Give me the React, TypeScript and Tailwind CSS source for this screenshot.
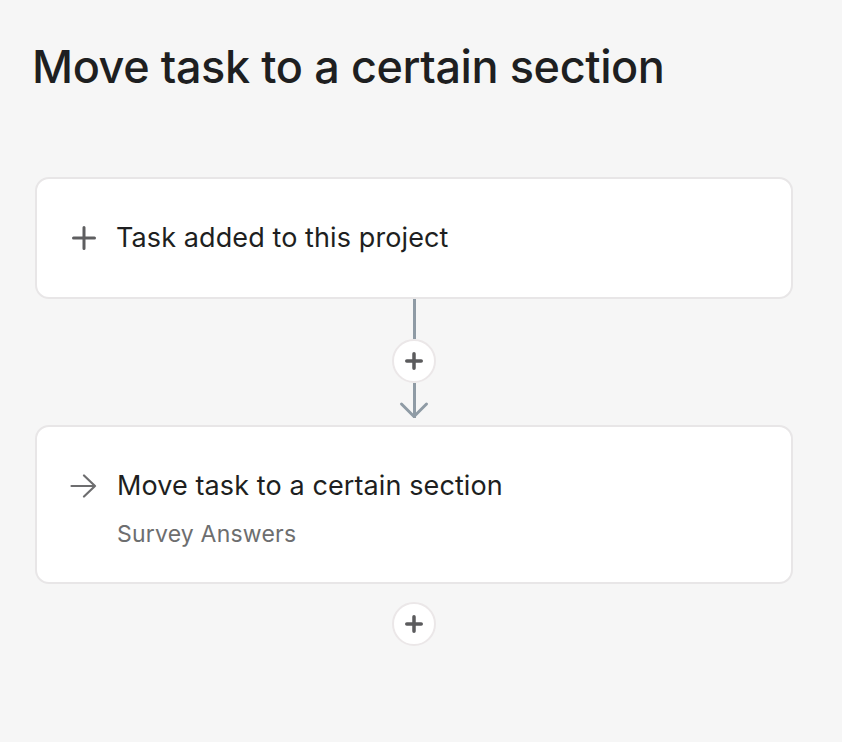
function PlusIcon({ size, stroke, color }: { size: number; stroke: number; color: string }) {
  const h = size / 2;
  return (
    <svg width={size} height={size} viewBox={`0 0 ${size} ${size}`}>
      <path
        d={`M${h} ${stroke / 2} V${size - stroke / 2} M${stroke / 2} ${h} H${size - stroke / 2}`}
        stroke={color}
        strokeWidth={stroke}
        strokeLinecap="round"
        fill="none"
      />
    </svg>
  );
}

function AddButton() {
  return (
    <button className="w-[44px] h-[44px] rounded-full bg-white border-2 border-[#ebe7e8] flex items-center justify-center">
      <PlusIcon size={18} stroke={3.5} color="#5b5b5d" />
    </button>
  );
}

export default function App() {
  return (
    <div
      className="w-[842px] h-[742px] bg-[#f6f6f6] overflow-hidden"
      style={{ fontFamily: "Inter, 'Noto Sans', sans-serif" }}
    >
      <h1 className="pl-[32px] pt-[39px] text-[45px] leading-[56px] font-medium tracking-[-0.4px] text-[#1e1f21]">
        Move task to a certain section
      </h1>

      <div className="ml-[35px] mt-[82px] w-[758px] flex flex-col items-center">
        <div className="w-full h-[122px] bg-white border-2 border-[#e8e6e7] rounded-[14px] flex items-center pl-[35px] gap-[20px]">
          <PlusIcon size={24} stroke={3} color="#5e5e60" />
          <span className="text-[27px] leading-[32px] tracking-[0.1px] text-[#1e1f21]">Task added to this project</span>
        </div>

        <div className="flex flex-col items-center">
          <div className="w-[3px] h-[40px] bg-[#8f9ba5]" />
          <AddButton />
          <div className="relative w-[3px] h-[35px] bg-[#8f9ba5]">
            <svg
              width="30"
              height="18"
              viewBox="0 0 30 18"
              className="absolute left-1/2 -translate-x-1/2 bottom-[-1px]"
            >
              <path d="M2.5 3 L15 15.5 L27.5 3" fill="none" stroke="#8f9ba5" strokeWidth="3" strokeLinecap="round" strokeLinejoin="round" />
            </svg>
          </div>
        </div>

        <div className="mt-[7px] w-full h-[159px] bg-white border-2 border-[#e8e6e7] rounded-[14px] flex flex-col pt-[43px] pl-[33px]">
          <div className="flex items-center gap-[20px]">
            <svg width="27" height="24" viewBox="0 0 27 24">
              <path
                d="M1.5 12 H25 M14 1.5 L25 12 L14 22.5"
                fill="none"
                stroke="#6d6d6f"
                strokeWidth="2.2"
                strokeLinecap="round"
                strokeLinejoin="round"
              />
            </svg>
            <span className="text-[27px] leading-[32px] tracking-[0.1px] text-[#1e1f21]">Move task to a certain section</span>
          </div>
          <div className="pl-[47px] mt-[18px] text-[23px] leading-[28px] tracking-[0.2px] text-[#6d6e6f]">Survey Answers</div>
        </div>

        <div className="mt-[18px]">
          <AddButton />
        </div>
      </div>
    </div>
  );
}
